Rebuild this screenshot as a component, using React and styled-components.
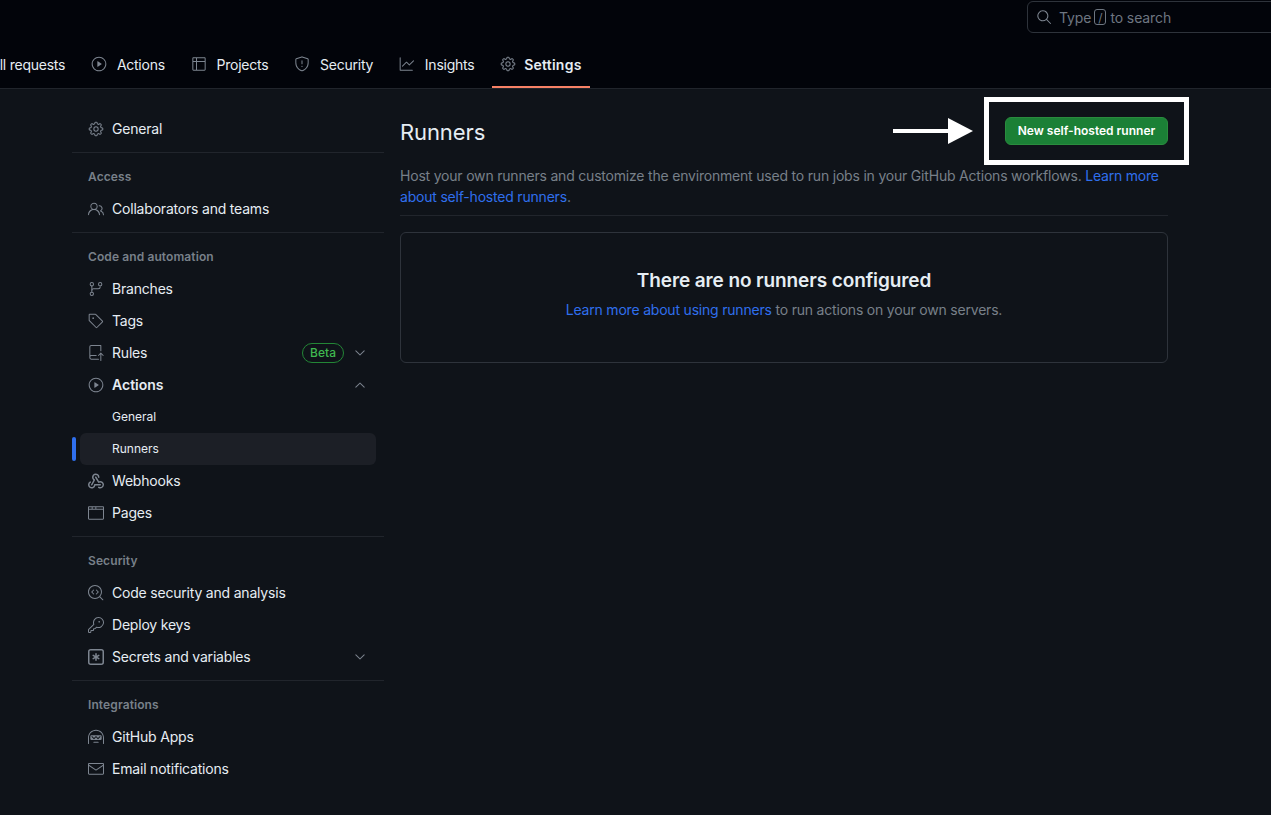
import styled, { createGlobalStyle } from 'styled-components';
import {
  GoChevronDown,
  GoChevronUp,
  GoBrowser,
  GoCodescan,
  GoGear,
  GoGitBranch,
  GoGitPullRequest,
  GoGraph,
  GoHubot,
  GoKey,
  GoMail,
  GoPeople,
  GoPlay,
  GoRepoPush,
  GoSearch,
  GoShield,
  GoTable,
  GoTag
} from 'react-icons/go';

const WebhookIcon = ({ size }) => (
  <svg width={size} height={size} viewBox='0 0 16 16' fill='currentColor'>
    <path d='M5.5 4.25a2.25 2.25 0 0 1 4.5 0 .75.75 0 0 0 1.5 0 3.75 3.75 0 1 0-6.14 2.889l-2.272 4.258a.75.75 0 0 0 1.324.706L7 7.25a.75.75 0 0 0-.309-1.015A2.25 2.25 0 0 1 5.5 4.25Z' />
    <path d='M7.364 3.607a.75.75 0 0 1 1.03.257l2.608 4.349a3.75 3.75 0 1 1-.628 6.785.75.75 0 0 1 .752-1.299 2.25 2.25 0 1 0-.033-3.88.75.75 0 0 1-1.03-.256L7.107 4.636a.75.75 0 0 1 .257-1.03Z' />
    <path d='M2.9 8.776A.75.75 0 0 1 2.625 9.8 2.25 2.25 0 1 0 6 11.75a.75.75 0 0 1 .75-.751h5.5a.75.75 0 0 1 0 1.5H7.425a3.751 3.751 0 1 1-5.55-3.998.75.75 0 0 1 1.024.274Z' />
  </svg>
);

const KeyAsteriskIcon = ({ size }) => (
  <svg width={size} height={size} viewBox='0 0 16 16' fill='currentColor'>
    <path d='M0 2.75A2.75 2.75 0 0 1 2.75 0h10.5A2.75 2.75 0 0 1 16 2.75v10.5A2.75 2.75 0 0 1 13.25 16H2.75A2.75 2.75 0 0 1 0 13.25ZM2.75 1.5c-.69 0-1.25.56-1.25 1.25v10.5c0 .69.56 1.25 1.25 1.25h10.5c.69 0 1.25-.56 1.25-1.25V2.75c0-.69-.56-1.25-1.25-1.25Z' />
    <path d='M8 4a.75.75 0 0 1 .75.75V6.7l1.69-.975a.75.75 0 0 1 .75 1.3L9.5 8l1.69.976a.75.75 0 0 1-.75 1.298L8.75 9.3v1.951a.75.75 0 0 1-1.5 0V9.299l-1.69.976a.75.75 0 0 1-.75-1.3L6.5 8l-1.69-.975a.75.75 0 0 1 .75-1.3l1.69.976V4.75A.75.75 0 0 1 8 4Z' />
  </svg>
);

const tabs = [
  { label: 'Pull requests', icon: GoGitPullRequest },
  { label: 'Actions', icon: GoPlay },
  { label: 'Projects', icon: GoTable },
  { label: 'Security', icon: GoShield },
  { label: 'Insights', icon: GoGraph },
  { label: 'Settings', icon: GoGear, active: true }
];

const sections = [
  {
    items: [{ label: 'General', icon: GoGear }]
  },
  {
    title: 'Access',
    items: [{ label: 'Collaborators and teams', icon: GoPeople }]
  },
  {
    title: 'Code and automation',
    items: [
      { label: 'Branches', icon: GoGitBranch },
      { label: 'Tags', icon: GoTag },
      { label: 'Rules', icon: GoRepoPush, beta: true, chevron: 'down' },
      { label: 'Actions', icon: GoPlay, bold: true, chevron: 'up' },
      { label: 'General', sub: true },
      { label: 'Runners', sub: true, current: true },
      { label: 'Webhooks', icon: WebhookIcon },
      { label: 'Pages', icon: GoBrowser }
    ]
  },
  {
    title: 'Security',
    items: [
      { label: 'Code security and analysis', icon: GoCodescan },
      { label: 'Deploy keys', icon: GoKey },
      { label: 'Secrets and variables', icon: KeyAsteriskIcon, chevron: 'down' }
    ]
  },
  {
    title: 'Integrations',
    items: [
      { label: 'GitHub Apps', icon: GoHubot },
      { label: 'Email notifications', icon: GoMail }
    ]
  }
];

export default function App() {
  return (
    <Page>
      <GlobalStyle />
      <Header>
        <SearchRow>
          <SearchBox>
            <GoSearch size={16} />
            <SearchText>
              <span>Type</span>
              <SlashKey>/</SlashKey>
              <span>to search</span>
            </SearchText>
          </SearchBox>
        </SearchRow>
        <TabRow>
          {tabs.map((t) => (
            <Tab key={t.label} active={t.active}>
              <t.icon size={16} />
              <span>{t.label}</span>
            </Tab>
          ))}
        </TabRow>
      </Header>
      <Content>
        <Sidebar>
          {sections.map((s, i) => (
            <Section key={i}>
              {s.title && <SectionTitle>{s.title}</SectionTitle>}
              {s.items.map((item) => (
                <NavItem key={item.label + item.sub} current={item.current}>
                  {item.current && <CurrentMark />}
                  {item.icon && (
                    <NavIcon>
                      <item.icon size={16} />
                    </NavIcon>
                  )}
                  <NavLabel bold={item.bold} sub={item.sub}>
                    {item.label}
                  </NavLabel>
                  {item.beta && <Beta>Beta</Beta>}
                  {item.chevron === 'down' && (
                    <Chevron>
                      <GoChevronDown size={16} />
                    </Chevron>
                  )}
                  {item.chevron === 'up' && (
                    <Chevron>
                      <GoChevronUp size={16} />
                    </Chevron>
                  )}
                </NavItem>
              ))}
            </Section>
          ))}
        </Sidebar>
        <Main>
          <TitleRow>
            <Title>Runners</Title>
            <GreenButton>New self-hosted runner</GreenButton>
          </TitleRow>
          <Description>
            Host your own runners and customize the environment used to run jobs in your GitHub
            Actions workflows. <BlueLink>Learn more about self-hosted runners</BlueLink>.
          </Description>
          <EmptyBox>
            <EmptyTitle>There are no runners configured</EmptyTitle>
            <EmptyText>
              <BlueLink>Learn more about using runners</BlueLink> to run actions on your own
              servers.
            </EmptyText>
          </EmptyBox>
        </Main>
      </Content>
      <CalloutFrame />
      <CalloutArrow width='81' height='26' viewBox='0 0 81 26'>
        <rect x='0' y='11' width='56' height='4' fill='#fff' />
        <polygon points='55,0 80,13 55,26' fill='#fff' />
      </CalloutArrow>
    </Page>
  );
}

const GlobalStyle = createGlobalStyle`
  * {
    box-sizing: border-box;
  }
  html, body {
    margin: 0;
    padding: 0;
    background: #0f1319;
  }
`;

const Page = styled.div`
  position: relative;
  width: 1271px;
  height: 815px;
  overflow: hidden;
  background: #0f1319;
  font-family: 'Inter', 'Liberation Sans', sans-serif;
  font-size: 14px;
  color: #e6edf3;
`;

const Header = styled.header`
  height: 89px;
  background: #02040a;
  border-bottom: 1px solid #21252c;
`;

const SearchRow = styled.div`
  display: flex;
  height: 48px;
  padding: 1px 0 0 1027px;
`;

const SearchBox = styled.div`
  display: flex;
  align-items: center;
  flex: none;
  width: 320px;
  height: 32px;
  padding-left: 8px;
  gap: 7px;
  border: 1px solid #2e333b;
  border-radius: 6px;
  color: #7d8590;
`;

const SearchText = styled.div`
  display: flex;
  align-items: center;
  gap: 3px;
  letter-spacing: -0.1px;
  color: #6e7681;
`;

const SlashKey = styled.span`
  display: inline-flex;
  align-items: center;
  justify-content: center;
  width: 12px;
  height: 16px;
  border: 1px solid #6e7681;
  border-radius: 3px;
  font-size: 12px;
  margin-right: 1px;
`;

const TabRow = styled.nav`
  display: flex;
  gap: 9.75px;
  height: 40px;
  margin-left: -51px;
`;

const Tab = styled.div`
  display: flex;
  align-items: center;
  flex: none;
  gap: ${(props) => (props.active ? '8px' : '10px')};
  height: 40px;
  padding: 0 8px 6px;
  font-weight: ${(props) => (props.active ? 600 : 400)};
  letter-spacing: ${(props) => (props.active ? '0.25px' : '-0.25px')};
  color: #e6edf3;
  border-bottom: 2px solid ${(props) => (props.active ? '#f78166' : 'transparent')};

  svg {
    color: #7d8590;
  }
`;

const Content = styled.div`
  display: flex;
  padding: 24px 0 0 72px;
  gap: 16px;
`;

const Sidebar = styled.aside`
  flex: none;
  width: 312px;
`;

const Section = styled.div`
  padding-bottom: 7px;
  margin-bottom: 8px;
  border-bottom: 1px solid #21252c;

  &:last-child {
    border-bottom: none;
  }
`;

const SectionTitle = styled.div`
  height: 32px;
  padding: 6px 16px 0;
  line-height: 20px;
  font-size: 12px;
  font-weight: 600;
  letter-spacing: 0.1px;
  color: #788089;
`;

const NavItem = styled.div`
  position: relative;
  display: flex;
  align-items: center;
  width: 296px;
  height: 32px;
  margin-left: 8px;
  padding: 0 8px;
  border-radius: 6px;
  background: ${(props) => (props.current ? '#1c1f26' : 'transparent')};
`;

const CurrentMark = styled.span`
  position: absolute;
  left: -8px;
  top: 4px;
  width: 4px;
  height: 24px;
  border-radius: 6px;
  background: #2f6fed;
`;

const NavIcon = styled.span`
  display: flex;
  flex: none;
  width: 16px;
  margin-right: 8px;
  color: #7d8590;
`;

const NavLabel = styled.span`
  flex: 1;
  padding-bottom: 2px;
  margin-left: ${(props) => (props.sub ? '24px' : '0')};
  font-size: ${(props) => (props.sub ? '12px' : '14px')};
  font-weight: ${(props) => (props.bold ? 600 : 400)};
  letter-spacing: ${(props) => (props.sub || props.bold ? '0' : '-0.2px')};
`;

const Beta = styled.span`
  height: 20px;
  padding: 0 7px;
  margin-right: 8px;
  border: 1px solid #238636;
  border-radius: 10px;
  font-size: 12px;
  font-weight: 500;
  line-height: 18px;
  color: #3fb950;
`;

const Chevron = styled.span`
  display: flex;
  width: 16px;
  color: #7d8590;
`;

const Main = styled.main`
  flex: none;
  width: 768px;
`;

const TitleRow = styled.div`
  display: flex;
  align-items: center;
  justify-content: space-between;
  height: 36px;
  margin-bottom: 16px;
`;

const Title = styled.h2`
  margin: 2px 0 0;
  font-size: 22px;
  font-weight: 400;
  letter-spacing: -0.1px;
  color: #e6edf3;
`;

const GreenButton = styled.button`
  width: 163px;
  height: 28px;
  padding: 0 0 1px;
  border: 1px solid #2a8c3e;
  border-radius: 6px;
  background: #1b8036;
  color: #fff;
  font-family: inherit;
  font-size: 12px;
  font-weight: 600;
`;

const Description = styled.p`
  margin: 0 0 16px;
  padding-bottom: 8px;
  border-bottom: 1px solid #21252c;
  line-height: 21px;
  letter-spacing: -0.2px;
  color: #788089;
`;

const BlueLink = styled.span`
  color: #2f6fed;
`;

const EmptyBox = styled.section`
  height: 131px;
  padding-top: 34px;
  border: 1px solid #2e333b;
  border-radius: 6px;
  text-align: center;
`;

const EmptyTitle = styled.h3`
  margin: 0 0 4px;
  font-size: 19px;
  line-height: 28px;
  font-weight: 600;
  letter-spacing: -0.1px;
  color: #e6edf3;
`;

const EmptyText = styled.p`
  margin: 0;
  line-height: 21px;
  letter-spacing: -0.2px;
  color: #788089;
`;

const CalloutFrame = styled.div`
  position: absolute;
  left: 984px;
  top: 97px;
  width: 205px;
  height: 68px;
  border: 5px solid #fff;
`;

const CalloutArrow = styled.svg`
  position: absolute;
  left: 893px;
  top: 118px;
`;
